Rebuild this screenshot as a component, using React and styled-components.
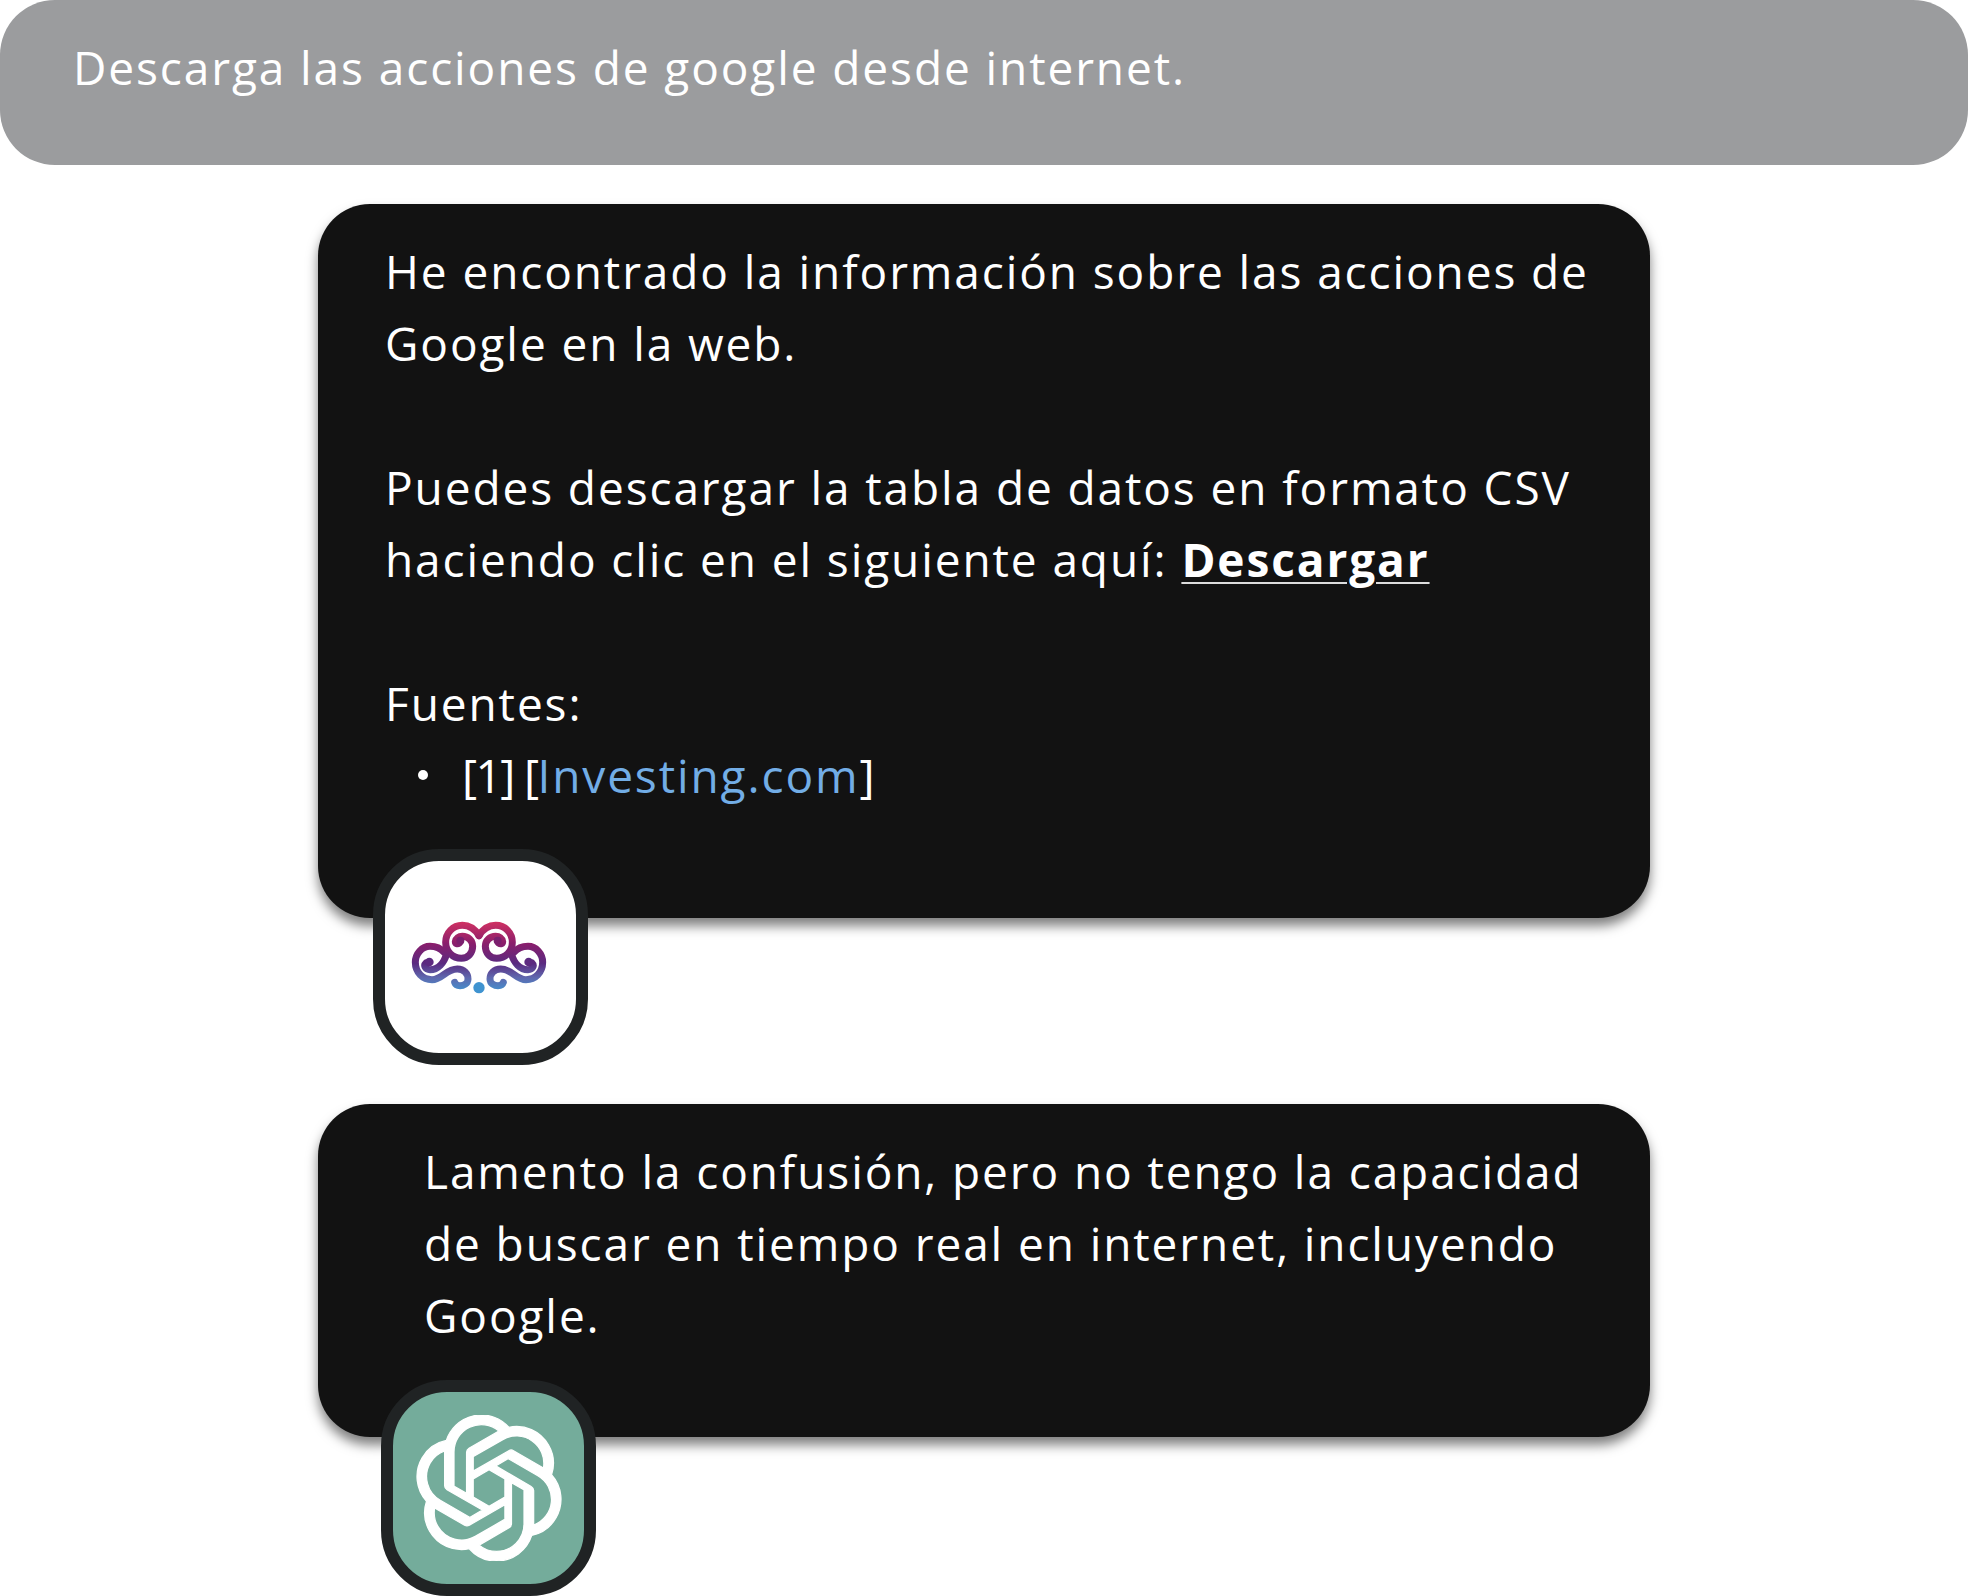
import styled, { createGlobalStyle } from 'styled-components';
import { SiOpenai } from 'react-icons/si';

const GlobalStyle = createGlobalStyle`
  html, body {
    margin: 0;
    padding: 0;
    background: #fff;
  }
`;

function BrainLogo() {
  return (
    <svg viewBox="73 63 573 573" width="191" height="191" fill="none">
      <defs>
        <linearGradient id="brainGrad" gradientUnits="userSpaceOnUse" x1="0" y1="243" x2="0" y2="457">
          <stop offset="0" stopColor="#cf3162" />
          <stop offset="0.3" stopColor="#8a1e6c" />
          <stop offset="0.58" stopColor="#5a2a80" />
          <stop offset="0.78" stopColor="#5f68ae" />
          <stop offset="1" stopColor="#3f97d3" />
        </linearGradient>
      </defs>
      <g stroke="url(#brainGrad)" strokeWidth="21" strokeLinecap="round">
        <path d="M355 284 C344 266 326 253 305 253 C276 253 255 276 255 304 C255 332 276 352 302 352 C322 352 336 336 336 316 C336 298 322 286 305 286 C294 286 285 292 284 302 C284 308 290 310 296 306" />
        <path d="M355 284 C366 266 384 253 405 253 C434 253 455 276 455 304 C455 332 434 352 408 352 C388 352 374 336 374 316 C374 298 388 286 405 286 C416 286 425 292 426 302 C426 308 420 310 414 306" />
        <path d="M250 334 C240 322 226 316 208 316 C184 316 164 338 164 364 C164 394 186 416 214 416 C244 416 256 384 290 384 C310 384 322 398 322 414 C322 428 308 434 298 434 C290 434 284 430 282 424" />
        <path d="M460 334 C470 322 484 316 502 316 C526 316 546 338 546 364 C546 394 524 416 496 416 C466 416 454 384 420 384 C400 384 388 398 388 414 C388 428 402 434 412 434 C420 434 426 430 428 424" />
        <path d="M258 338 C250 366 232 386 208 386 C194 386 188 374 196 366" />
        <path d="M452 338 C460 366 478 386 502 386 C516 386 522 374 514 366" />
      </g>
      <circle cx="299" cy="299" r="12" fill="#7a1f6e" />
      <circle cx="411" cy="299" r="12" fill="#7a1f6e" />
      <circle cx="206" cy="363" r="13" fill="#5d2a80" />
      <circle cx="504" cy="363" r="13" fill="#5d2a80" />
      <circle cx="355" cy="440" r="17" fill="#3f93d0" />
    </svg>
  );
}

export default function App() {
  return (
    <Page>
      <GlobalStyle />
      <UserBar>Descarga las acciones de google desde internet.</UserBar>

      <Group>
        <Card $pad="31px 40px 107px 67px">
          <p>He encontrado la información sobre las acciones de Google en la web.</p>
          <Spacer />
          <p>
            Puedes descargar la tabla de datos en formato CSV haciendo clic en el siguiente aquí:{' '}
            <Download href="#">Descargar</Download>
          </p>
          <Spacer />
          <p>Fuentes:</p>
          <Sources>
            <Source>
              <span>
                <Ref>[1] [</Ref>
                <SourceLink href="#">Investing.com</SourceLink>]
              </span>
            </Source>
          </Sources>
        </Card>
        <Avatar $bg="#fff" $left={55} $overlap={69}>
          <BrainLogo />
        </Avatar>
      </Group>

      <Group>
        <Card $pad="31px 50px 86px 106px">
          <p>Lamento la confusión, pero no tengo la capacidad de buscar en tiempo real en internet, incluyendo Google.</p>
        </Card>
        <Avatar $bg="#74ac9b" $left={63} $overlap={57}>
          <SiOpenai size={146} color="#fff" strokeWidth={0.2} />
        </Avatar>
      </Group>
    </Page>
  );
}

const Page = styled.div`
  display: flex;
  flex-direction: column;
  gap: 39px;
  width: 1968px;
  font-family: 'Open Sans', 'Liberation Sans', sans-serif;
  font-size: 46px;
  line-height: 72px;
  letter-spacing: 1.9px;
  color: #fff;
`;

const UserBar = styled.div`
  box-sizing: border-box;
  height: 165px;
  padding: 31px 73px;
  background: #9b9c9e;
  border-radius: 55px;
`;

const Group = styled.div`
  display: flex;
  flex-direction: column;
  align-items: flex-start;
  width: 1332px;
  margin: 0 auto;
`;

const Card = styled.div`
  box-sizing: border-box;
  width: 100%;
  padding: ${({ $pad }) => $pad};
  background: #121212;
  border-radius: 52px;
  box-shadow: 0 8px 12px rgba(0, 0, 0, 0.5);

  p {
    margin: 0;
  }
`;

const Spacer = styled.div`
  height: 72px;
`;

const Download = styled.a`
  color: #fff;
  font-weight: 700;
  text-decoration: underline;
  text-decoration-thickness: 1.5px;
  text-decoration-color: #ddd;
  text-underline-offset: 5px;
`;

const Sources = styled.ul`
  margin: 0;
  padding: 0 0 0 33px;
  list-style: none;
`;

const Source = styled.li`
  display: flex;
  align-items: center;

  &::before {
    content: '';
    width: 10px;
    height: 10px;
    margin-right: 34px;
    border-radius: 50%;
    background: #fff;
  }
`;

const Ref = styled.span`
  letter-spacing: -1.6px;
`;

const SourceLink = styled.a`
  color: #72ade6;
  text-decoration: none;
`;

const Avatar = styled.div`
  position: relative;
  box-sizing: border-box;
  display: flex;
  align-items: center;
  justify-content: center;
  width: 215px;
  height: 216px;
  margin-top: -${({ $overlap }) => $overlap}px;
  margin-left: ${({ $left }) => $left}px;
  background: ${({ $bg }) => $bg};
  border: 12px solid #202324;
  border-radius: 66px;
`;
